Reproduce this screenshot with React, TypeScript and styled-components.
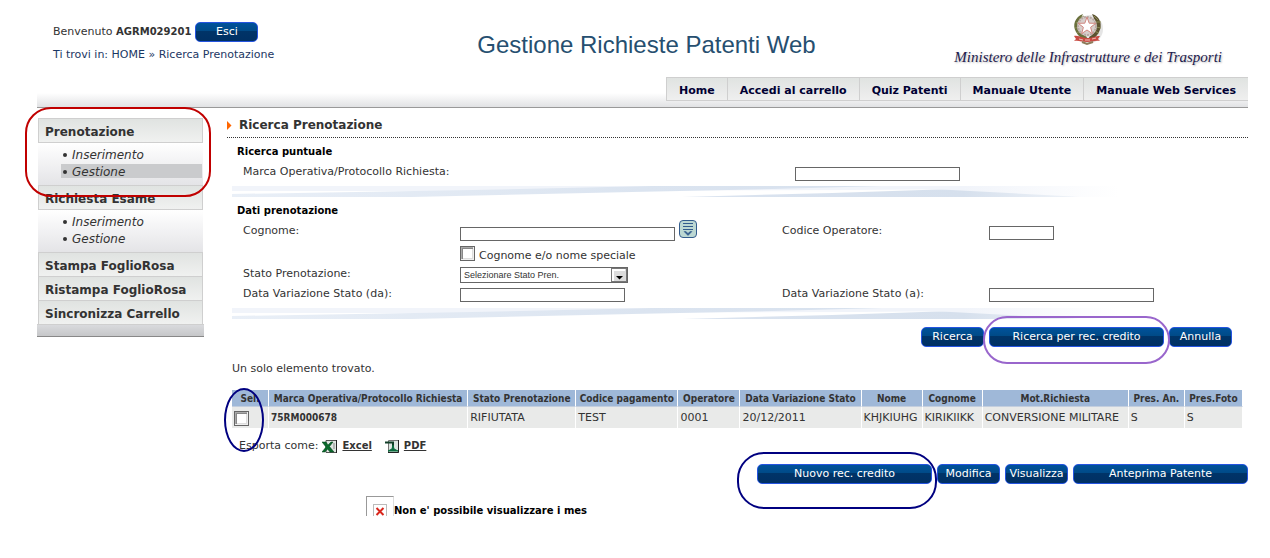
import React from "react";
import styled, { createGlobalStyle, css } from "styled-components";

const GlobalStyle = createGlobalStyle`
  * { box-sizing: border-box; }
  body {
    margin: 0;
    background: #fff;
    color: #333;
    font-family: Verdana, "DejaVu Sans", sans-serif;
    font-size: 11px;
    line-height: 14px;
  }
  a { color: inherit; text-decoration: none; }
`;

const Page = styled.div`
  padding: 0 22px 0 37px;
`;

const Header = styled.header`
  position: relative;
  display: grid;
  grid-template-columns: 1fr auto 1fr;
  grid-template-rows: 77px 30px;
  background: linear-gradient(#fff, #e1e2e4) bottom / 100% 14px no-repeat;
  border-bottom: 1px solid #999;
`;

const UserBox = styled.div`
  padding: 22px 0 0 16px;
`;

const Welcome = styled.div`
  display: flex;
  align-items: center;
  gap: 4px;
  height: 20px;
  b { font-size: 10px; }
`;

const Crumbs = styled.div`
  margin-top: 6px;
  color: #1b3763;
`;

const Title = styled.h1`
  margin: 0;
  padding: 31px 0 0 8px;
  color: #264f70;
  font: 400 24px/28px "Liberation Sans", Arial, sans-serif;
`;

const Ministry = styled.div`
  display: flex;
  flex-direction: column;
  align-items: center;
  justify-self: end;
  padding: 11px 26px 0 0;
  color: #1d1a4d;
  font: italic 400 15px/20px "Liberation Serif", "Times New Roman", serif;
  white-space: nowrap;
  text-shadow: 1px 1px 2px #bbb;
`;

const TopNav = styled.nav`
  grid-column: 1 / -1;
  justify-self: end;
  display: flex;
  height: 24px;
  border: 1px solid #cfcfcf;
  border-right: 0;
  background: linear-gradient(#e0e3e1, #efefef);
  color: #000033;
  font-weight: 700;
  line-height: 25px;
  a { padding: 0 12px; }
  a + a { border-left: 1px solid #cfcfcf; }
`;

const Body = styled.div`
  display: flex;
  align-items: flex-start;
  gap: 23px;
  padding-top: 10px;
`;

const Sidebar = styled.nav`
  flex: 0 0 167px;
  color: #333;
`;

const Group = styled.div`
  position: relative;
  margin: 0 1px;
`;

const GroupTitle = styled.a`
  display: block;
  height: 24px;
  padding-left: 6px;
  border: 1px solid #cfcfcf;
  border-bottom: 0;
  background: linear-gradient(#e0e3e1, #f0f1f0);
  font-size: 12px;
  font-weight: 700;
  line-height: 27px;
`;

const SubList = styled.ul`
  height: 43px;
  margin: 0;
  padding: 4px 1px 0 23px;
  border-top: 1px solid #cfcfcf;
  background: linear-gradient(#fff, #e4e4e7);
  list-style: none;
  font-size: 12px;
  line-height: 16px;
  font-style: italic;
`;

const SubItem = styled.li<{ $active?: boolean }>`
  display: flex;
  align-items: center;
  gap: 5px;
  height: 14px;
  margin-bottom: 3px;
  padding: 1px 0 0 2px;
  background: ${(p) => (p.$active ? "#cacbcd" : "transparent")};
  &::before {
    content: "";
    width: 4px;
    height: 4px;
    border-radius: 2px;
    background: #333;
  }
`;

const SideFoot = styled.div`
  height: 13px;
  border-top: 1px solid #cfcfcf;
  border-bottom: 1px solid #888;
  background: linear-gradient(#d9dadd, #c6c7c9);
`;

const Main = styled.main`
  flex: 1;
  min-width: 0;
`;

const SectionTitle = styled.h2`
  display: flex;
  align-items: center;
  gap: 7px;
  height: 20px;
  margin: 0;
  padding-bottom: 5px;
  border-bottom: 1px dotted #333;
  font-size: 12px;
  font-weight: 700;
`;

const Panel = styled.form`
  padding: 0 0 0 5px;
`;

const Fieldset = styled.fieldset`
  margin: 0;
  padding: 0;
  border: 0;
  min-width: 0;
`;

const Legend = styled.legend`
  padding: 7px 0 0 5px;
  height: 27px;
  color: #000;
  font-size: 10px;
  font-weight: 700;
`;

const Row = styled.div<{ $single?: boolean; $height: number }>`
  display: grid;
  grid-template-columns: ${(p) =>
    p.$single ? "552fr 453fr" : "217fr 322fr 207fr 259fr"};
  height: ${(p) => p.$height}px;
  padding-left: 11px;
`;

const Field = styled.div<{ $drop?: number }>`
  display: flex;
  align-items: flex-start;
  gap: 4px;
  padding-top: ${(p) => p.$drop ?? 0}px;
`;

const CheckLabel = styled.label`
  padding-top: 3px;
`;

const TextInput = styled.input<{ $width: number }>`
  width: ${(p) => p.$width}px;
  height: 14px;
  padding: 0 2px;
  border: 1px solid #666;
  border-radius: 0;
  background: #fff;
  font: 11px/12px "Liberation Sans", Arial, sans-serif;
`;

const Check = styled.input`
  appearance: none;
  display: block;
  flex: none;
  width: 15px;
  height: 15px;
  margin: 0;
  border: 1px solid #666;
  background: #fff;
  box-shadow: inset -1px -1px 0 #eee, inset 1px 1px 0 #aaa, inset 2px 2px 0 #888, inset -2px -2px 0 #ddd;
`;

const SelectBox = styled.div`
  position: relative;
  width: 168px;
  height: 16px;
  svg {
    position: absolute;
    top: 1px;
    right: 1px;
    pointer-events: none;
  }
`;

const Select = styled.select`
  appearance: none;
  display: block;
  width: 100%;
  height: 16px;
  padding: 0 18px 0 3px;
  border: 1px solid #666;
  border-radius: 0;
  background: #fff;
  color: #333;
  font: 9px/14px "Liberation Sans", Arial, sans-serif;
`;

const IconButton = styled.button`
  width: 18px;
  height: 18px;
  margin-top: -7px;
  padding: 0;
  border: 0;
  background: none;
  svg { display: block; }
`;

const Wave = styled.svg`
  display: block;
  width: 90%;
  height: 12px;
`;

const Actions = styled.div<{ $inset?: boolean }>`
  display: flex;
  justify-content: flex-end;
  gap: 5px;
  padding: ${(p) => (p.$inset ? "8px 16px 0 0" : "0")};
`;

const Button = styled.button<{ $wide?: boolean }>`
  width: ${(p) => (p.$wide ? "175px" : "63px")};
  height: 20px;
  padding: 0 0 1px;
  border: 1px solid #2554e0;
  border-radius: 5px;
  background: linear-gradient(#00529b 0, #004a86 46%, #003468 46%, #003063);
  color: #fff;
  font: 11px/16px Verdana, "DejaVu Sans", sans-serif;
  white-space: nowrap;
`;

const Marked = styled.div`
  position: relative;
`;

const markPosition = {
  menu: css`
    inset: -11px -8px -12px -13px;
    border-color: #c00000;
    border-radius: 26px;
  `,
  search: css`
    inset: -11px -6px -17px -6px;
    border-color: #9966cc;
    border-radius: 27px;
  `,
  create: css`
    inset: -12px -5px -25px -20px;
    border-color: #000080;
    border-radius: 27px;
  `,
  select: css`
    inset: -2px auto auto -8px;
    width: 40px;
    height: 64px;
    border-color: #000080;
    border-radius: 50%;
  `,
};

const Mark = styled.span<{ $at: keyof typeof markPosition }>`
  position: absolute;
  z-index: 1;
  border: 2px solid;
  pointer-events: none;
  ${(p) => markPosition[p.$at]}
`;

const Results = styled.section`
  padding-left: 5px;
`;

const Found = styled.p`
  margin: 0;
  padding: 15px 0 14px;
`;

const TableWrap = styled.div`
  position: relative;
  padding-right: 5px;
`;

const Table = styled.table`
  width: 100%;
  table-layout: fixed;
  border-collapse: separate;
  border-spacing: 0;
  white-space: nowrap;
  th, td {
    padding: 0 2px;
    border-right: 1px solid #fff;
    text-align: left;
    overflow: hidden;
  }
  th {
    height: 17px;
    background: #9fb8d8;
    border-bottom: 1px solid #c3cede;
    font: 700 10px/15px Tahoma, "DejaVu Sans Condensed", sans-serif;
    text-align: center;
  }
  td {
    height: 21px;
    padding-top: 1px;
    background: #e9eae9;
    font-size: 11px;
  }
  td:nth-child(2) {
    font: 700 10px/14px Tahoma, "DejaVu Sans Condensed", sans-serif;
  }
`;

const Export = styled.div`
  display: flex;
  align-items: center;
  height: 20px;
  margin: 8px 0;
  padding-left: 7px;
  a {
    display: flex;
    align-items: center;
    gap: 5px;
    margin: 0 9px 0 4px;
    font-size: 10px;
    font-weight: 700;
  }
  a span { text-decoration: underline; }
`;

const Notice = styled.div`
  display: flex;
  align-items: flex-start;
  height: 20px;
  margin: 12px 0 0 139px;
  overflow: hidden;
  color: #000;
  font-size: 10px;
  font-weight: 700;
  line-height: 30px;
`;

const Broken = styled.span`
  flex: none;
  width: 28px;
  height: 28px;
  padding: 7px 0 0 6px;
  border: 1px solid #999;
  border-right-color: #ddd;
  svg { display: block; }
`;

const Emblem = () => (
  <svg width="34" height="36" viewBox="0 0 34 36" role="img" aria-label="Emblema della Repubblica Italiana">
    <ellipse cx="19" cy="18" rx="13" ry="14" fill="#999" opacity="0.25" />
    <path d="M12 3C4 6 1 14 5 21c2 4 6 7 10 8l1-3C8 23 6 14 12 3z" fill="#69703c" />
    <path d="M21 3c8 2 11 11 7 18-2 4-5 7-9 8l-1-3c7-3 9-12 3-23z" fill="#5d5330" />
    <path d="M8 8l5-3M5 12l5-2M4 17l5-1M6 22l5-3M23 5l4 4M25 11l5 0M25 16l5 1M23 20l5 2" stroke="#8b8a55" strokeWidth="1" />
    <circle cx="16" cy="15" r="10" fill="#d8cfcc" />
    <circle cx="16" cy="15" r="9" fill="none" stroke="#b9aaa6" strokeWidth="2" strokeDasharray="2 1" />
    <path d="M16 6l2.200 6.200 6.600.1-5.200 4 1.800 6.400-5.400-3.700-5.400 3.700 1.800-6.400-5.200-4 6.600-.1z" fill="#fff" stroke="#d28780" strokeWidth="1" />
    <path d="M3 25c4-1 7 2 13 2s8-2 13-2l-2 3 2 2c-5-1-7 1-13 1s-8-2-13-1l2-2z" fill="#c94b43" />
    <path d="M8 28l4 1M14 29h5M21 28l4-1" stroke="#ecc0b8" strokeWidth="1" />
    <path d="M11 31l5 2 6-2" stroke="#8d7c5a" strokeWidth="2" fill="none" />
  </svg>
);

const Arrow = () => (
  <svg width="5" height="9" viewBox="0 0 5 9" aria-hidden="true">
    <path d="M0 0l4.500 4.500L0 9z" fill="#f60" />
  </svg>
);

const Divider = () => (
  <Wave viewBox="0 0 914 12" preserveAspectRatio="none" aria-hidden="true">
    <defs>
      <linearGradient id="sweep" gradientUnits="userSpaceOnUse" x1="0" x2="914" y1="0" y2="0">
        <stop offset="0" stopColor="#e9eff7" />
        <stop offset="0.45" stopColor="#dbe4f0" />
        <stop offset="0.8" stopColor="#d6e0ed" />
        <stop offset="1" stopColor="#fff" />
      </linearGradient>
      <linearGradient id="haze" gradientUnits="userSpaceOnUse" x1="0" x2="914" y1="0" y2="0">
        <stop offset="0" stopColor="#f1f4fa" />
        <stop offset="0.8" stopColor="#f1f4fa" />
        <stop offset="0.97" stopColor="#fff" />
      </linearGradient>
    </defs>
    <path d="M0 1H914V3L620 5L240 6H0z" fill="url(#haze)" />
    <path d="M0 9L240 5L420 1H650L540 4L400 7L180 12H0z" fill="url(#sweep)" />
    <path d="M450 12L600 8L720 4H760L800 7L850 12z" fill="url(#sweep)" />
    <path d="M700 4L800 1H914V12H850z" fill="url(#haze)" />
  </Wave>
);

const ListIcon = () => (
  <svg width="18" height="18" viewBox="0 0 18 18" aria-hidden="true">
    <rect x="0.500" y="0.500" width="17" height="17" rx="3.500" fill="#bcd8d3" stroke="#335c8d" />
    <path d="M4 3.500h10M4 6.500h10M4 9.500h10" stroke="#335c8d" />
    <path d="M5 11.500h2l2 2 2-2h2L9 15.500z" fill="#335c8d" stroke="#335c8d" strokeWidth="0.500" />
  </svg>
);

const SelectArrow = () => (
  <svg width="16" height="14" viewBox="0 0 16 14" aria-hidden="true">
    <rect x="0.500" y="0.500" width="15" height="13" fill="#dcdcdc" stroke="#777" />
    <path d="M1 1h13v2H3v10H1z" fill="#fff" />
    <path d="M5 8h7L8.500 11.500z" fill="#000" />
  </svg>
);

const ExcelIcon = () => (
  <svg width="15" height="13" viewBox="0 0 15 13" aria-hidden="true">
    <path d="M4 .5h10.500v12H4z" fill="#dfe6e2" stroke="#555" />
    <path d="M14.500 0v13" stroke="#222" />
    <path d="M11 4h2M11 6h2M11 8h2" stroke="#888" />
    <path d="M0 2h4l2 3 3-3h2L7.500 6.500 12 12H8L5.500 9 3 12H0l4-5z" fill="#0a6a2c" stroke="#033d17" strokeWidth="0.500" />
  </svg>
);

const PdfIcon = () => (
  <svg width="14" height="13" viewBox="0 0 14 13" aria-hidden="true">
    <path d="M3.500 .5h10v12h-10z" fill="#dfe6e2" stroke="#777" />
    <path d="M13.500 0v12.500H3" fill="none" stroke="#222" />
    <path d="M0 1.500h9v5H7v-3H0z" fill="#123f28" />
    <path d="M3 11l4-2 1-4 1 4 4 2z" fill="#0a6a3c" stroke="#0a6a3c" />
  </svg>
);

const BrokenIcon = () => (
  <svg width="14" height="14" viewBox="0 0 14 14" aria-hidden="true">
    <rect x="0.500" y="0.500" width="13" height="13" fill="#fff" stroke="#bbb" />
    <path d="M3.500 4l7 7M10.500 4l-7 7" stroke="#d9261c" strokeWidth="2" />
  </svg>
);

const navLinks = ["Home", "Accedi al carrello", "Quiz Patenti", "Manuale Utente", "Manuale Web Services"];

const menu = [
  { title: "Prenotazione", items: ["Inserimento", "Gestione"], active: "Gestione", marked: true },
  { title: "Richiesta Esame", items: ["Inserimento", "Gestione"] },
  { title: "Stampa FoglioRosa" },
  { title: "Ristampa FoglioRosa" },
  { title: "Sincronizza Carrello" },
];

const columns = [
  { name: "Sel.", width: 37 },
  { name: "Marca Operativa/Protocollo Richiesta", width: 199, value: "75RM000678" },
  { name: "Stato Prenotazione", width: 108, value: "RIFIUTATA" },
  { name: "Codice pagamento", width: 102, value: "TEST" },
  { name: "Operatore", width: 62, value: "0001" },
  { name: "Data Variazione Stato", width: 121, value: "20/12/2011" },
  { name: "Nome", width: 61, value: "KHJKIUHG" },
  { name: "Cognome", width: 60, value: "KIRIKIIKK" },
  { name: "Mot.Richiesta", width: 146, value: "CONVERSIONE MILITARE" },
  { name: "Pres. An.", width: 56, value: "S" },
  { name: "Pres.Foto", width: 58, value: "S" },
];

const Col = styled.col<{ $width: number }>`
  width: ${(p) => p.$width}px;
`;

export default function App() {
  return (
    <Page>
      <GlobalStyle />
      <Header>
        <UserBox>
          <Welcome>
            <span>Benvenuto <b>AGRM029201</b></span>
            <Button type="button">Esci</Button>
          </Welcome>
          <Crumbs>Ti trovi in: <a href="#home">HOME</a> » Ricerca Prenotazione</Crumbs>
        </UserBox>
        <Title>Gestione Richieste Patenti Web</Title>
        <Ministry>
          <Emblem />
          <span>Ministero delle Infrastrutture e dei Trasporti</span>
        </Ministry>
        <TopNav>
          {navLinks.map((name) => <a href="#nav" key={name}>{name}</a>)}
        </TopNav>
      </Header>

      <Body>
        <Sidebar>
          {menu.map((group) => (
            <Group key={group.title}>
              <GroupTitle href="#menu">{group.title}</GroupTitle>
              {group.items && (
                <SubList>
                  {group.items.map((item) => (
                    <SubItem key={item} $active={item === group.active}>
                      <a href="#item">{item}</a>
                    </SubItem>
                  ))}
                </SubList>
              )}
              {group.marked && <Mark $at="menu" />}
            </Group>
          ))}
          <SideFoot />
        </Sidebar>

        <Main>
          <SectionTitle><Arrow />Ricerca Prenotazione</SectionTitle>
          <Panel onSubmit={(e) => e.preventDefault()}>
            <Fieldset>
              <Legend>Ricerca puntuale</Legend>
              <Row $single $height={20}>
                <label htmlFor="marca">Marca Operativa/Protocollo Richiesta:</label>
                <Field $drop={2}><TextInput id="marca" $width={165} /></Field>
              </Row>
            </Fieldset>
            <Divider />
            <Fieldset>
              <Legend>Dati prenotazione</Legend>
              <Row $height={22}>
                <label htmlFor="cognome">Cognome:</label>
                <Field $drop={3}>
                  <TextInput id="cognome" $width={215} />
                  <IconButton type="button" aria-label="Elenco"><ListIcon /></IconButton>
                </Field>
                <label htmlFor="operatore">Codice Operatore:</label>
                <Field $drop={2}><TextInput id="operatore" $width={65} /></Field>
              </Row>
              <Row $height={21}>
                <span />
                <Field>
                  <Check id="speciale" type="checkbox" />
                  <CheckLabel htmlFor="speciale">Cognome e/o nome speciale</CheckLabel>
                </Field>
              </Row>
              <Row $height={20}>
                <label htmlFor="stato">Stato Prenotazione:</label>
                <Field>
                  <SelectBox>
                    <Select id="stato"><option>Selezionare Stato Pren.</option></Select>
                    <SelectArrow />
                  </SelectBox>
                </Field>
              </Row>
              <Row $height={20}>
                <label htmlFor="da">Data Variazione Stato (da):</label>
                <Field $drop={1}><TextInput id="da" $width={165} /></Field>
                <label htmlFor="a">Data Variazione Stato (a):</label>
                <Field $drop={1}><TextInput id="a" $width={165} /></Field>
              </Row>
            </Fieldset>
            <Divider />
            <Actions $inset>
              <Button type="submit">Ricerca</Button>
              <Marked>
                <Button type="button" $wide>Ricerca per rec. credito</Button>
                <Mark $at="search" />
              </Marked>
              <Button type="reset">Annulla</Button>
            </Actions>
          </Panel>

          <Results>
            <Found>Un solo elemento trovato.</Found>
            <TableWrap>
              <Table>
                <colgroup>
                  {columns.map((c) => <Col key={c.name} $width={c.width} />)}
                </colgroup>
                <thead>
                  <tr>{columns.map((c) => <th key={c.name} scope="col">{c.name}</th>)}</tr>
                </thead>
                <tbody>
                  <tr>
                    {columns.map((c) => (
                      <td key={c.name}>
                        {c.value ?? <Check type="checkbox" aria-label="Seleziona 75RM000678" />}
                      </td>
                    ))}
                  </tr>
                </tbody>
              </Table>
              <Mark $at="select" />
            </TableWrap>
            <Export>
              Esporta come:
              <a href="#excel"><ExcelIcon /><span>Excel</span></a>
              <a href="#pdf"><PdfIcon /><span>PDF</span></a>
            </Export>
            <Actions>
              <Marked>
                <Button type="button" $wide>Nuovo rec. credito</Button>
                <Mark $at="create" />
              </Marked>
              <Button type="button">Modifica</Button>
              <Button type="button">Visualizza</Button>
              <Button type="button" $wide>Anteprima Patente</Button>
            </Actions>
          </Results>
          <Notice>
            <Broken><BrokenIcon /></Broken>
            Non e' possibile visualizzare i mes
          </Notice>
        </Main>
      </Body>
    </Page>
  );
}
